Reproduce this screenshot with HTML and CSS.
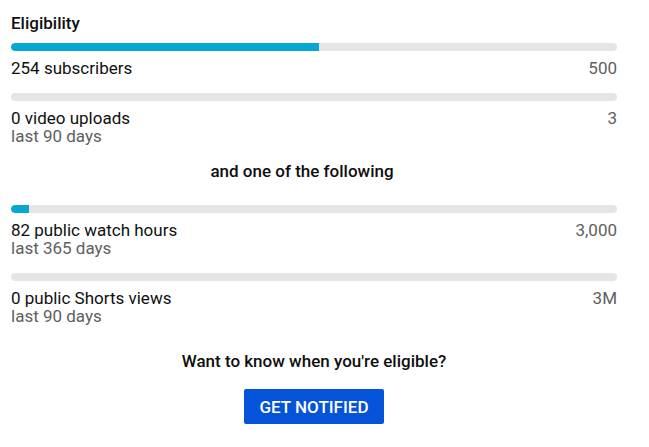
FILE: index.html
```html
<!DOCTYPE html>
<html lang="en">
<head>
<meta charset="utf-8">
<title>Eligibility</title>
<link rel="stylesheet" href="styles.css">
</head>
<body>
<main class="panel">
  <h2 class="title">Eligibility</h2>

  <section class="req">
    <div class="bar"><div class="fill" style="width:50.8%"></div></div>
    <div class="row">
      <div class="label">254 subscribers</div>
      <div class="goal">500</div>
    </div>
  </section>

  <section class="req">
    <div class="bar"><div class="fill" style="width:0%"></div></div>
    <div class="row">
      <div class="label">0 video uploads<div class="sub">last 90 days</div></div>
      <div class="goal">3</div>
    </div>
  </section>

  <p class="divider">and one of the following</p>

  <section class="req">
    <div class="bar"><div class="fill" style="width:3%"></div></div>
    <div class="row">
      <div class="label">82 public watch hours<div class="sub">last 365 days</div></div>
      <div class="goal">3,000</div>
    </div>
  </section>

  <section class="req">
    <div class="bar"><div class="fill" style="width:0%"></div></div>
    <div class="row">
      <div class="label">0 public Shorts views<div class="sub">last 90 days</div></div>
      <div class="goal">3M</div>
    </div>
  </section>

  <div class="notify">
    <p class="ask">Want to know when you're eligible?</p>
    <button class="btn" type="button">GET NOTIFIED</button>
  </div>
</main>
</body>
</html>
```

FILE: styles.css
```css
html, body {
  margin: 0;
  padding: 0;
  background: #ffffff;
}

body {
  font-family: Roboto, "Noto Sans", Arial, sans-serif;
  color: #0f0f0f;
  font-size: 17px;
}

.panel {
  width: 606px;
  padding: 11px 0 0 11px;
  display: flex;
  flex-direction: column;
}

.title {
  margin: 0;
  font-size: 17px;
  font-weight: 500;
  line-height: 24px;
}

.req {
  display: flex;
  flex-direction: column;
  gap: 8px;
}

.title + .req {
  margin-top: 8px;
}

.req + .req {
  margin-top: 16px;
}

.bar {
  height: 8px;
  border-radius: 4px;
  background: #e5e5e5;
  overflow: hidden;
}

.fill {
  height: 100%;
  background: #06a7d5;
  border-radius: 4px 0 0 4px;
}

.row {
  display: flex;
  justify-content: space-between;
  align-items: flex-start;
  line-height: 18px;
}

.label {
  color: #0f0f0f;
}

.sub {
  color: #606060;
}

.goal {
  color: #606060;
}

.divider {
  margin: 14px 0 22px;
  padding-right: 24px;
  text-align: center;
  font-weight: 500;
  line-height: 24px;
}

.notify {
  margin-top: 24px;
  display: flex;
  flex-direction: column;
  align-items: center;
  gap: 16px;
}

.ask {
  margin: 0;
  font-weight: 500;
  line-height: 24px;
}

.btn {
  height: 35px;
  padding: 0 16px;
  border: none;
  border-radius: 2px;
  background: #0553d8;
  color: #ffffff;
  font-family: inherit;
  font-size: 17px;
  font-weight: 500;
  cursor: pointer;
}
```
